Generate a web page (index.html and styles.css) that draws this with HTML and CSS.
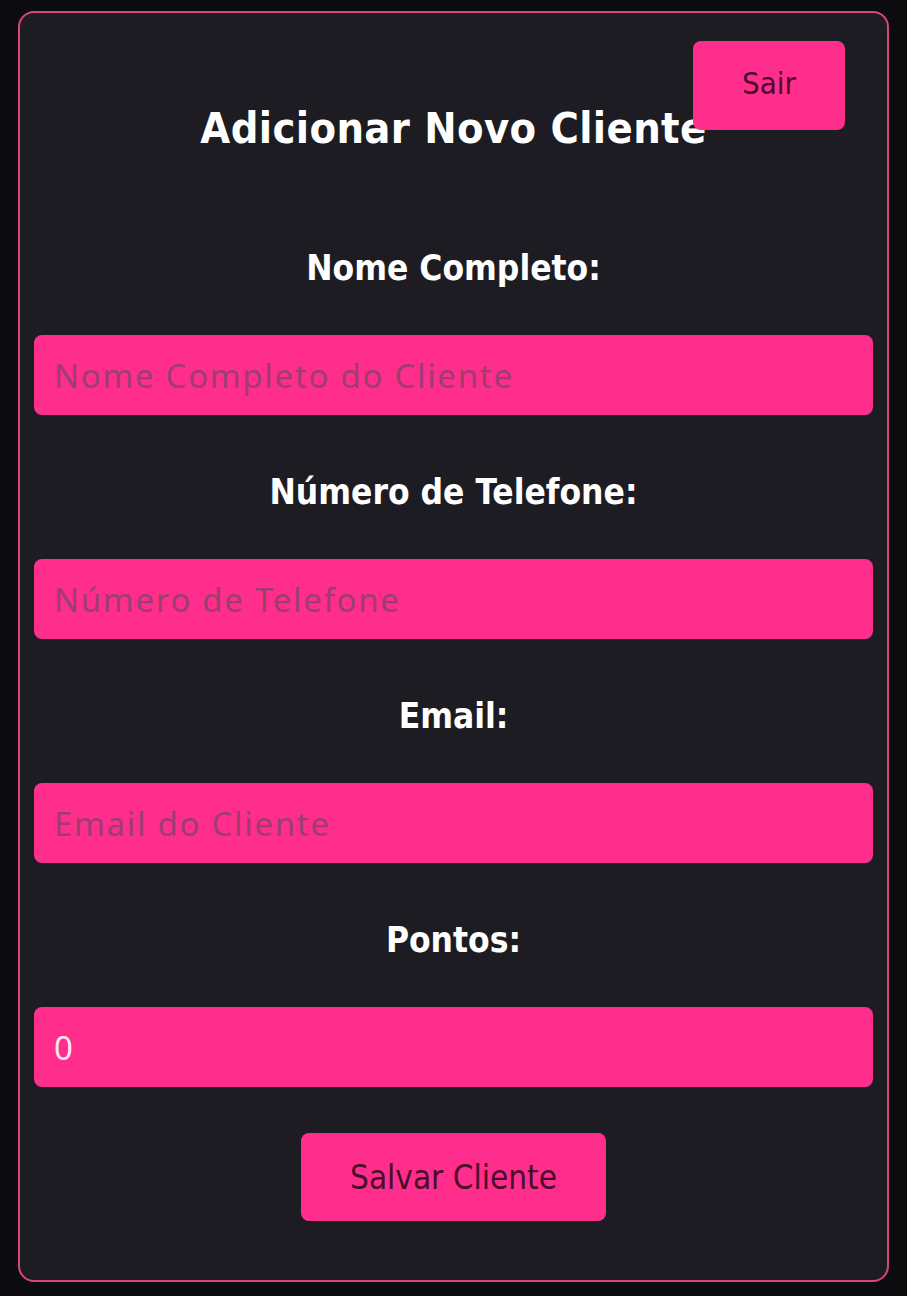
FILE: index.html
```html
<!DOCTYPE html>
<html lang="pt">
<head>
<meta charset="utf-8">
<title>Adicionar Novo Cliente</title>
<link rel="stylesheet" href="styles.css">
</head>
<body>
<div class="card">
  <button class="btn btn-exit" type="button">Sair</button>
  <h2 class="title">Adicionar Novo Cliente</h2>
  <form class="form">
    <div class="group">
      <label class="label" for="nome">Nome Completo:</label>
      <input class="input" id="nome" type="text" placeholder="Nome Completo do Cliente">
    </div>
    <div class="group">
      <label class="label" for="tel">Número de Telefone:</label>
      <input class="input" id="tel" type="text" placeholder="Número de Telefone">
    </div>
    <div class="group">
      <label class="label" for="email">Email:</label>
      <input class="input" id="email" type="text" placeholder="Email do Cliente">
    </div>
    <div class="group">
      <label class="label" for="pontos">Pontos:</label>
      <input class="input" id="pontos" type="text" value="0">
    </div>
    <button class="btn btn-save" type="button">Salvar Cliente</button>
  </form>
</div>
</body>
</html>
```

FILE: styles.css
```css
html, body {
  margin: 0;
  padding: 0;
  background: #0c0c0e;
}
body {
  padding: 11px 18px 14px 18px;
  font-family: "DejaVu Sans", "Noto Sans", sans-serif;
}
.card {
  position: relative;
  box-sizing: border-box;
  width: 871px;
  height: 1271px;
  border: 2px solid #d8457f;
  border-radius: 16px;
  background: #1c1c22;
  padding: 0 14px;
}
.title {
  margin: 89px 0 0 0;
  text-align: center;
  color: #ffffff;
  font-size: 43px;
  line-height: 52px;
  font-weight: bold;
  font-stretch: condensed;
  letter-spacing: 0.4px;
}
.form {
  display: flex;
  flex-direction: column;
  gap: 57px;
  margin-top: 94px;
}
.group {
  display: flex;
  flex-direction: column;
  gap: 47px;
}
.label {
  display: block;
  text-align: center;
  color: #ffffff;
  font-size: 35px;
  line-height: 40px;
  font-weight: bold;
  font-stretch: condensed;
}
.input {
  box-sizing: border-box;
  width: 100%;
  height: 80px;
  border: none;
  border-radius: 8px;
  background: #ff2d8c;
  padding: 0 20px;
  font-family: "Noto Sans", sans-serif;
  font-size: 33px;
  letter-spacing: 1.7px;
  color: #fbe6ef;
  outline: none;
}
.input::placeholder {
  color: #9e3d70;
  opacity: 1;
}
.btn {
  border: none;
  border-radius: 8px;
  background: #ff2d8c;
  color: #4a0d2a;
  font-family: "DejaVu Sans", sans-serif;
  font-stretch: condensed;
  cursor: pointer;
}
.btn-exit {
  position: absolute;
  top: 28px;
  right: 42px;
  width: 152px;
  height: 89px;
  font-size: 31px;
  padding: 0 0 6px 0;
}
.btn-save {
  align-self: center;
  width: 305px;
  height: 88px;
  margin-top: -11px;
  font-size: 33px;
}
```
